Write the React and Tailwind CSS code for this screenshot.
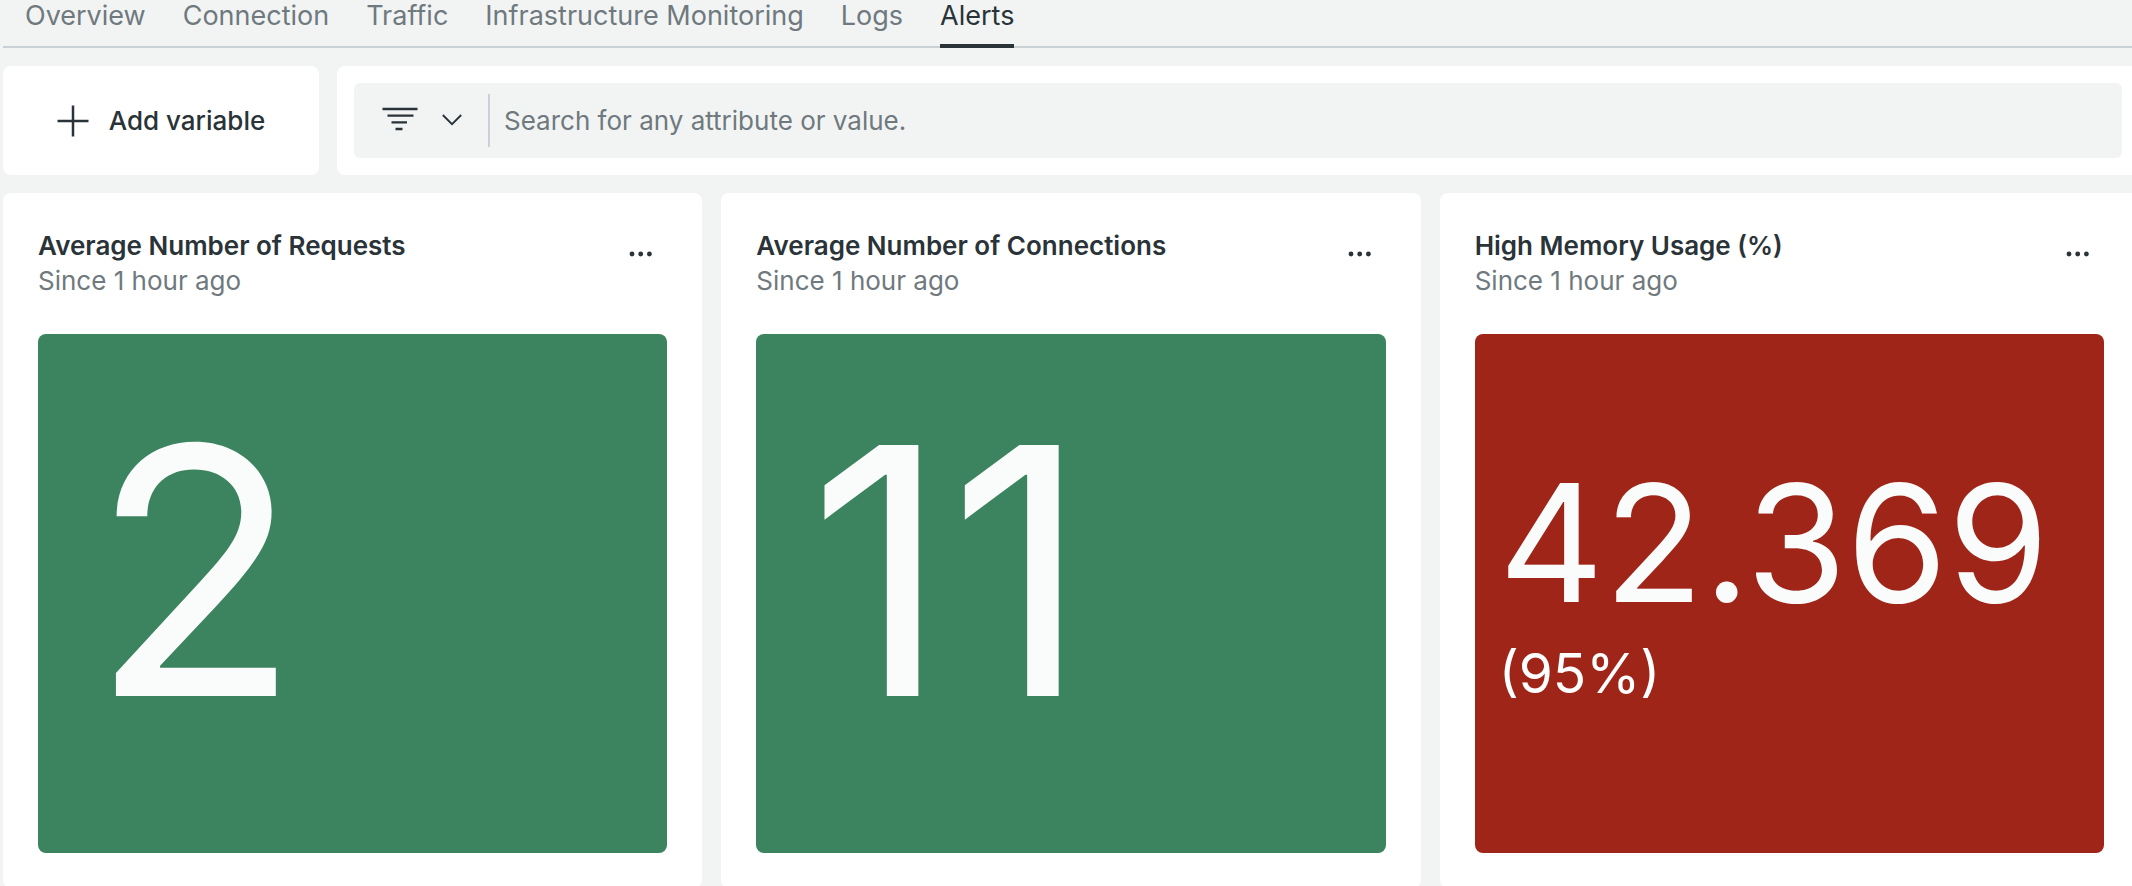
const tabs = ["Overview", "Connection", "Traffic", "Infrastructure Monitoring", "Logs", "Alerts"];

const cards = [
  { title: "Average Number of Requests", value: "2", tone: "ok" },
  { title: "Average Number of Connections", value: "11", tone: "ok" },
  { title: "High Memory Usage (%)", value: "42.369", note: "(95%)", tone: "critical" },
];

function Tab({ label, active }) {
  return (
    <a
      href={"#" + label.toLowerCase().replace(" ", "-")}
      aria-current={active ? "page" : undefined}
      className={
        active
          ? "-mb-[2px] h-12 border-b-4 border-[#293338] text-[#293338]"
          : "h-[46px] text-[#6f797e]"
      }
    >
      {label}
    </a>
  );
}

function PlusIcon() {
  return (
    <svg width="32" height="32" viewBox="0 0 32 32" fill="none" stroke="currentColor" strokeWidth="2.5" aria-hidden="true">
      <path d="M16 0.5v31M0.5 16h31" />
    </svg>
  );
}

function FilterIcon() {
  return (
    <svg width="36" height="28" viewBox="0 0 36 28" fill="none" stroke="currentColor" strokeWidth="2.3" aria-hidden="true">
      <path d="M0.5 2h35M5.5 8.7h26M9.5 15.4h15.5M13.5 22h7" />
    </svg>
  );
}

function ChevronIcon() {
  return (
    <svg width="20" height="14" viewBox="0 0 20 14" fill="none" stroke="currentColor" strokeWidth="1.9" aria-hidden="true">
      <path d="M0.8 1l9.2 9.2 9.2-9.2" />
    </svg>
  );
}

function DotsIcon() {
  return (
    <svg width="24" height="6" viewBox="0 0 24 6" fill="currentColor" aria-hidden="true">
      <circle cx="3" cy="3" r="2.4" />
      <circle cx="11.7" cy="3" r="2.4" />
      <circle cx="20.4" cy="3" r="2.4" />
    </svg>
  );
}

function Billboard({ value, note, tone }) {
  if (tone === "critical") {
    return (
      <div className="flex h-[519px] flex-col justify-center rounded-lg bg-[#9f2519] px-6 pb-[22px] text-[#fafcfb]">
        <p className="text-[163px] leading-[180px]">{value}</p>
        <p className="text-[55px] leading-[80px] text-white">{note}</p>
      </div>
    );
  }
  return (
    <div className="flex h-[519px] items-center rounded-lg bg-[#3c845f] px-[52px] pb-[46px] text-[#fafcfb]">
      <p className="text-[345px] leading-[400px]">{value}</p>
    </div>
  );
}

function Card({ title, value, note, tone }) {
  return (
    <section className="rounded-lg bg-white p-[35px]">
      <header className="mb-9 flex items-start justify-between">
        <div className="leading-[35px]">
          <h2 className="font-semibold text-[#293338]">{title}</h2>
          <p className="text-[#6f797e]">Since 1 hour ago</p>
        </div>
        <button type="button" aria-label={"Options for " + title} className="flex h-[52px] items-center px-[14px] text-[#293338]">
          <DotsIcon />
        </button>
      </header>
      <Billboard value={value} note={note} tone={tone} />
    </section>
  );
}

export default function App() {
  return (
    <div className="h-screen overflow-hidden bg-[#f2f4f4] font-['Inter',sans-serif] text-[26px] text-[#293338]">
      <div className="-mr-[7px] pl-[3px]">
        <nav aria-label="Dashboard pages" className="flex h-12 gap-[37px] border-b-2 border-[#cad1d4] pl-[22px] text-[27px] leading-[32px]">
          {tabs.map((label) => (
            <Tab key={label} label={label} active={label === "Alerts"} />
          ))}
        </nav>

        <div className="mt-[18px] flex h-[109px] gap-[18px]">
          <button type="button" className="flex w-[316px] shrink-0 items-center justify-center gap-5 rounded-lg bg-white font-medium">
            <PlusIcon />
            Add variable
          </button>
          <div className="flex flex-1 rounded-lg bg-white px-[17px] py-[17px]">
            <div className="flex flex-1 items-center rounded-md bg-[#f2f4f4] pl-7">
              <button type="button" aria-label="Filter options" className="flex items-center gap-6">
                <FilterIcon />
                <ChevronIcon />
              </button>
              <span className="ml-[26px] h-[53px] w-[2px] bg-[#cad1d4]" />
              <input
                type="text"
                aria-label="Search"
                placeholder="Search for any attribute or value."
                className="min-w-0 flex-1 bg-transparent px-[14px] outline-none placeholder:text-[#6f797e]"
              />
            </div>
          </div>
        </div>

        <main className="mt-[18px] grid grid-cols-3 gap-[19px]">
          {cards.map((card) => (
            <Card key={card.title} {...card} />
          ))}
        </main>
      </div>
    </div>
  );
}
